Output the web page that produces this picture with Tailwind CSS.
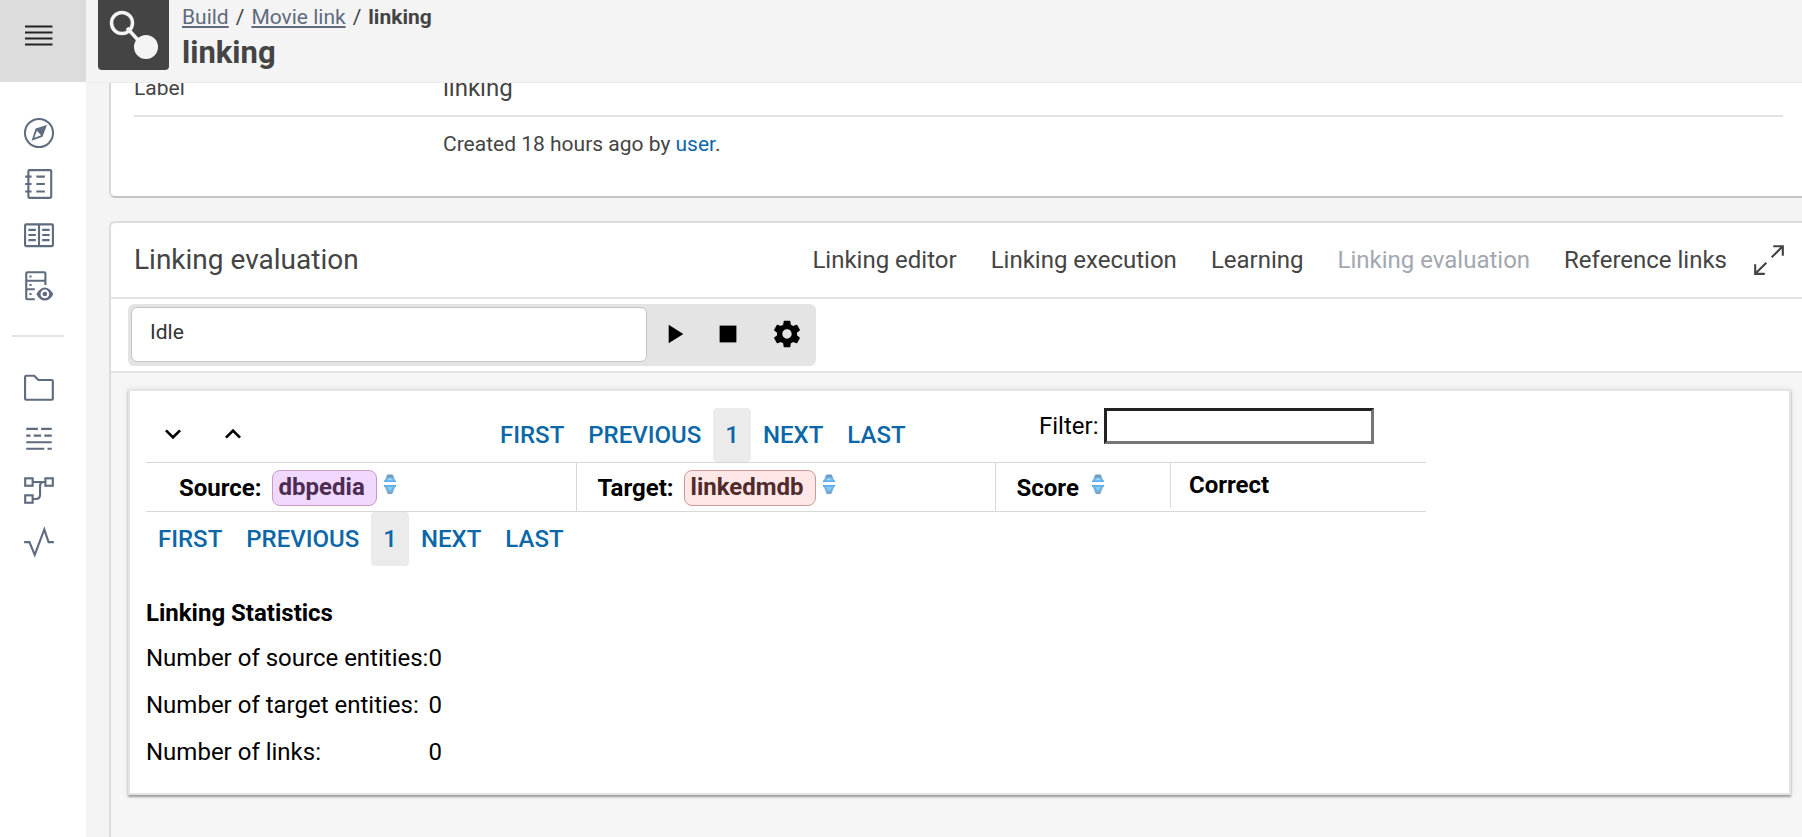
<!DOCTYPE html>
<html lang="en">
<head>
<meta charset="utf-8">
<title>linking</title>
<script src="https://cdn.jsdelivr.net/npm/@tailwindcss/browser@4"></script>
</head>
<body class="flex h-screen overflow-hidden bg-[#f4f4f4] font-[Roboto,sans-serif] text-[21px] leading-7 text-[#444]">

<!-- Icon set -->
<svg class="hidden" aria-hidden="true">
  <symbol id="sort" viewBox="0 0 14 22">
    <path d="M4.500 2h5L13 8.500H1Z" fill="#74b8ec"/><path d="M4.500 1.500h5L11 4.500H3Z" fill="#6d9cc6"/><path d="M7 5 10 7.500H4Z" fill="#a9dcfb"/><path d="M1 7.500h12V9H1Z" fill="#57aef0"/>
    <path d="M1 12h12v2H1Z" fill="#57aef0"/><path d="M1.500 13h11L9.500 20.500h-5Z" fill="#74b0e0"/><path d="M4 14h6L7 18Z" fill="#7fd0fb"/><path d="M4 18.500h6L9 21H5Z" fill="#7ba3c8"/>
  </symbol>
</svg>

<aside class="flex w-[86px] shrink-0 flex-col bg-white">
  <button type="button" aria-label="Toggle navigation" class="flex h-[82px] shrink-0 items-center bg-[#dcdcdc] pb-3 pl-[25px]">
    <svg class="h-[21px] w-7" viewBox="0 0 28 21" stroke="#222" stroke-width="2"><path d="M0 1.500h27.500M0 7.500h27.500M0 13.500h27.500M0 19.500h27.500"/></svg>
  </button>
  <nav aria-label="Main" class="flex flex-col pr-[9px] pt-[25px] text-[#5f6b7e]">
    <a href="#" aria-label="Explore" class="flex h-[51px] items-center justify-center"><svg class="size-[34px]" viewBox="0 0 32 32"><circle cx="16" cy="16" r="13.200" fill="none" stroke="currentColor" stroke-width="1.900"/><path fill="currentColor" fill-rule="evenodd" d="M23.500 8.500 12.800 11.800 9 23.300 19.300 19.500ZM14 13.900 18 18 11.600 20.500Z"/></svg></a>
    <a href="#" aria-label="Vocabularies" class="flex h-[51px] items-center justify-center"><svg class="size-[34px]" viewBox="0 0 32 32" fill="none" stroke="currentColor" stroke-width="2"><rect x="6" y="2.900" width="21.500" height="26.200" rx="1"/><path d="M3 9h6M3 16h6M3 23h6M13.500 9h8M13.500 16h8M13.500 23h8"/></svg></a>
    <a href="#" aria-label="Datasets" class="flex h-[51px] items-center justify-center"><svg class="size-[34px]" viewBox="0 0 32 32" fill="none" stroke="currentColor" stroke-width="2"><rect x="2.900" y="6" width="26.200" height="20.500" rx="1"/><path d="M16 6v20.500M6 11.200h7M6 16h7M6 20.800h7M19 11.200h7M19 16h7M19 20.800h7"/></svg></a>
    <a href="#" aria-label="Data view" class="flex h-[51px] items-center justify-center"><svg class="size-[34px]" viewBox="0 0 32 32" fill="none" stroke="currentColor" stroke-width="2"><path d="M12 28.500H5a1 1 0 0 1-1-1V4a1 1 0 0 1 1-1h16a1 1 0 0 1 1 1V15M4 11h18M4 19h8"/><path d="M7 7h2M7 15h2M7 23.500h2"/><path stroke="none" fill="currentColor" fill-rule="evenodd" d="M13.500 23.500Q17 17.300 21.500 17.300T29.500 23.500Q26.500 29.700 21.500 29.700T13.500 23.500ZM25.600 23.500a4.100 4.100 0 1 0-8.200 0 4.100 4.100 0 0 0 8.200 0Z"/><circle cx="21.500" cy="23.500" r="2.200" fill="currentColor" stroke="none"/></svg></a>
    <hr class="mb-[25px] ml-3 mr-[13px] mt-6 border-0 border-t-2 border-[#e4e4e4]">
    <a href="#" aria-label="Projects" class="flex h-[51px] items-center justify-center"><svg class="size-[34px]" viewBox="0 0 32 32" fill="none" stroke="currentColor" stroke-width="2" stroke-linejoin="round"><path d="M3.900 4.500H11.500L15.500 8.500H28a1 1 0 0 1 1 1V26a1 1 0 0 1-1 1H3.900a1 1 0 0 1-1-1V5.500a1 1 0 0 1 1-1Z"/></svg></a>
    <a href="#" aria-label="Lists" class="flex h-[51px] items-center justify-center"><svg class="size-[34px]" viewBox="0 0 32 32" fill="none" stroke="currentColor" stroke-width="2"><path d="M4 6.500H15M18 6.500H28M4 12.800H8M11 12.800H18M21 12.800H28M4 19H28M4 25.200H21M24 25.200H28"/></svg></a>
    <a href="#" aria-label="Workflows" class="flex h-[51px] items-center justify-center"><svg class="size-[34px]" viewBox="0 0 32 32" fill="none" stroke="currentColor" stroke-width="2"><rect x="3" y="5" width="7" height="7"/><rect x="22" y="5" width="7" height="7"/><rect x="3" y="21" width="7" height="7"/><path d="M10 8.500H22M20 8.500Q17 8.500 17 12V20Q17 24.500 13 24.500H10"/></svg></a>
    <a href="#" aria-label="Activities" class="flex h-[51px] items-center justify-center"><svg class="size-[34px]" viewBox="0 0 32 32" fill="none" stroke="currentColor" stroke-width="2"><path d="M2 17H7L12 29 21 5 25 17H30"/></svg></a>
  </nav>
</aside>

<div class="flex min-w-0 flex-1 flex-col">
  <header class="flex h-[83px] shrink-0 items-start gap-[13px] border-b border-[#ececec] pl-3">
    <div class="h-[70px] w-[71px] shrink-0 rounded-b bg-[#444]">
      <svg class="h-[70px] w-[71px]" viewBox="0 0 71 70"><path d="M29 28 40 40" stroke="#f4f4f4" stroke-width="3.500"/><circle cx="24" cy="23" r="10.500" fill="none" stroke="#f4f4f4" stroke-width="3.500"/><circle cx="48" cy="47" r="12" fill="#f4f4f4"/></svg>
    </div>
    <div class="h-[69px] overflow-hidden pt-[3px]">
      <nav aria-label="Breadcrumb" class="flex gap-[7px]">
        <a href="#" class="text-[#5f6b7e] underline underline-offset-2">Build</a><span>/</span>
        <a href="#" class="text-[#5f6b7e] underline underline-offset-2">Movie link</a><span>/</span>
        <span class="font-bold">linking</span>
      </nav>
      <h1 class="text-[31px] font-bold leading-[44px]">linking</h1>
    </div>
  </header>

  <main class="flex min-h-0 flex-1 flex-col overflow-hidden pl-[23px]">
    <section aria-label="Summary" class="-mt-[11px] shrink-0 rounded-bl-md border-b-2 border-l-2 border-b-[#c4c4c4] border-l-[#d8d8d8] bg-white pb-[38px] pl-[23px] pr-[19px]">
      <dl>
        <div class="flex border-b-2 border-[#e2e2e2] pb-[11px]">
          <dt class="w-[309px] leading-8">Label</dt><dd class="text-[24px] leading-8">linking</dd>
        </div>
        <div class="flex pt-[13px]">
          <dt class="w-[309px]"></dt><dd>Created 18 hours ago by <a href="#" class="text-[#0b67a8]">user</a>.</dd>
        </div>
      </dl>
    </section>

    <section class="mt-[23px] flex flex-1 flex-col rounded-tl-md border-l-2 border-t-2 border-[#dcdcdc] bg-[#f6f6f6]">
      <div class="flex h-[76px] shrink-0 items-center rounded-tl-md border-b-2 border-[#e4e4e4] bg-white pl-[23px] pr-[16px]">
        <h2 class="flex-1 text-[28px] leading-9">Linking evaluation</h2>
        <div class="flex items-center gap-[34px] text-[24px] leading-8">
          <a href="#">Linking editor</a>
          <a href="#">Linking execution</a>
          <a href="#">Learning</a>
          <a href="#" aria-current="page" class="text-[#a2a7b2]">Linking evaluation</a>
          <a href="#">Reference links</a>
        </div>
        <button type="button" aria-label="Full screen" class="ml-[25px]"><svg class="size-[34px]" viewBox="0 0 32 32" fill="none" stroke="#444" stroke-width="2"><path d="M20 3H29V12M29 3 18.500 13.500M12 29H3V20M3 29 13.500 18.500"/></svg></button>
      </div>

      <div class="flex shrink-0 border-b-2 border-[#e4e4e4] bg-white px-[17px] pb-[5px] pt-[5px]">
        <div class="flex items-center rounded-md bg-[#e4e4e4] pb-1 pl-[3px] pt-[3px]">
          <input type="text" aria-label="Status" value="Idle" readonly class="h-[55px] w-[516px] rounded-md border border-[#c4c4c4] bg-white pb-[5px] pl-[18px] text-[21px] text-[#333]">
          <button type="button" aria-label="Start" class="flex w-[54px] justify-center pb-[2px]"><svg class="size-8" viewBox="0 0 24 24"><path d="M8 5v14l11-7z"/></svg></button>
          <button type="button" aria-label="Stop" class="flex w-[53px] justify-center pb-[2px]"><svg class="size-8" viewBox="0 0 24 24"><path d="M5.700 5.700h12.600v12.600H5.700z"/></svg></button>
          <button type="button" aria-label="Settings" class="flex w-[62px] justify-center pb-[2px] pl-[3px]"><svg class="size-8" viewBox="0 0 24 24"><path d="M19.430 12.980c.04-.32.07-.64.07-.98s-.03-.66-.07-.98l2.110-1.650c.19-.15.24-.42.12-.64l-2-3.460c-.12-.22-.39-.3-.61-.22l-2.490 1c-.52-.4-1.080-.73-1.690-.98l-.38-2.650C14.460 2.180 14.250 2 14 2h-4c-.25 0-.46.18-.49.42l-.38 2.650c-.61.25-1.170.59-1.690.98l-2.490-1c-.23-.09-.49 0-.61.22l-2 3.460c-.13.22-.07.49.12.64l2.110 1.650c-.04.32-.07.65-.07.98s.03.66.07.98l-2.110 1.650c-.19.15-.24.42-.12.64l2 3.460c.12.22.39.3.61.22l2.490-1c.52.4 1.080.73 1.690.98l.38 2.650c.03.24.24.42.49.42h4c.25 0 .46-.18.49-.42l.38-2.650c.61-.25 1.170-.59 1.690-.98l2.490 1c.23.09.49 0 .61-.22l2-3.460c.12-.22.07-.49-.12-.64l-2.110-1.650zM12 15.500c-1.930 0-3.500-1.570-3.500-3.500s1.570-3.500 3.500-3.500 3.500 1.570 3.500 3.500-1.570 3.500-3.500 3.500z"/></svg></button>
        </div>
      </div>

      <div class="mb-auto ml-[17px] mr-[11px] mt-4 shrink-0 border-2 border-[#e4e4e4] bg-white px-4 pb-[17px] pt-[17px] text-[24px] leading-8 text-black shadow-[0_2px_2px_rgba(0,0,0,0.35),0_0_8px_rgba(0,0,0,0.08)]">
        <div class="flex h-[54px] items-start">
          <div class="flex w-[342px] gap-7 pl-[11px] pt-[10px]">
            <button type="button" aria-label="Expand all"><svg class="size-8" viewBox="0 0 24 24"><path d="M16.590 8.590 12 13.170 7.410 8.590 6 10l6 6 6-6z"/></svg></button>
            <button type="button" aria-label="Collapse all"><svg class="size-8" viewBox="0 0 24 24"><path d="M12 8l-6 6 1.410 1.410L12 10.830l4.590 4.580L18 14z"/></svg></button>
          </div>
          <nav aria-label="Pages, top" class="flex w-[551px] font-medium leading-[54px] text-[#0b67a8]">
            <a href="#" class="px-3">FIRST</a><a href="#" class="px-3">PREVIOUS</a><a href="#" aria-current="page" class="rounded bg-[#ebebeb] px-3">1</a><a href="#" class="px-3">NEXT</a><a href="#" class="px-3">LAST</a>
          </nav>
          <label class="flex items-center gap-[6px]">Filter:
            <input type="text" class="h-9 w-[270px] border-[3px] border-b-[#767676] border-l-[#222] border-r-[#767676] border-t-[#222] bg-white px-1">
          </label>
        </div>
        <table class="w-[1280px] table-fixed border-collapse border-y border-[#d8d8d8] text-left">
          <thead>
            <tr>
              <th scope="col" class="h-[49px] w-[430px] p-0 pl-[33px] font-bold">
                <div class="flex items-center pt-[2px]">Source:<span class="ml-[10px] h-9 rounded-lg border border-[#c79ac9] bg-[#f1d8ff] pl-[6px] pr-[11px] text-[#4d2c52]">dbpedia</span><button type="button" aria-label="Sort by source" class="ml-[6px] pb-[8px]"><svg class="h-[22px] w-[14px]"><use href="#sort"/></svg></button></div>
              </th>
              <th scope="col" class="w-[419px] border-l border-[#d8d8d8] p-0 pl-[21px] font-bold">
                <div class="flex items-center pt-[2px]">Target:<span class="ml-[10px] h-9 rounded-lg border border-[#c99a9c] bg-[#ffe7e7] pl-[6px] pr-[11px] text-[#4f2b2c]">linkedmdb</span><button type="button" aria-label="Sort by target" class="ml-[6px] pb-[8px]"><svg class="h-[22px] w-[14px]"><use href="#sort"/></svg></button></div>
              </th>
              <th scope="col" class="w-[175px] border-l border-[#d8d8d8] p-0 pl-[21px] font-bold">
                <div class="flex items-center pt-[2px]">Score<button type="button" aria-label="Sort by score" class="ml-3 pb-[8px]"><svg class="h-[22px] w-[14px]"><use href="#sort"/></svg></button></div>
              </th>
              <th scope="col" class="p-0 align-top font-bold"><div class="h-[45px] border-l border-[#d8d8d8] pl-[18px] pt-[6px]">Correct</div></th>
            </tr>
          </thead>
        </table>
        <nav aria-label="Pages, bottom" class="flex font-medium leading-[54px] text-[#0b67a8]">
          <a href="#" class="px-3">FIRST</a><a href="#" class="px-3">PREVIOUS</a><a href="#" aria-current="page" class="rounded bg-[#ebebeb] px-3">1</a><a href="#" class="px-3">NEXT</a><a href="#" class="px-3">LAST</a>
        </nav>
        <h3 class="mt-[31px] font-bold">Linking Statistics</h3>
        <table class="mt-[6px] leading-[47px]">
          <tbody>
            <tr><th scope="row" class="p-0 text-left font-normal">Number of source entities:</th><td class="p-0">0</td></tr>
            <tr><th scope="row" class="p-0 text-left font-normal">Number of target entities:</th><td class="p-0">0</td></tr>
            <tr><th scope="row" class="p-0 text-left font-normal">Number of links:</th><td class="p-0">0</td></tr>
          </tbody>
        </table>
      </div>
    </section>
  </main>
</div>
</body>
</html>
